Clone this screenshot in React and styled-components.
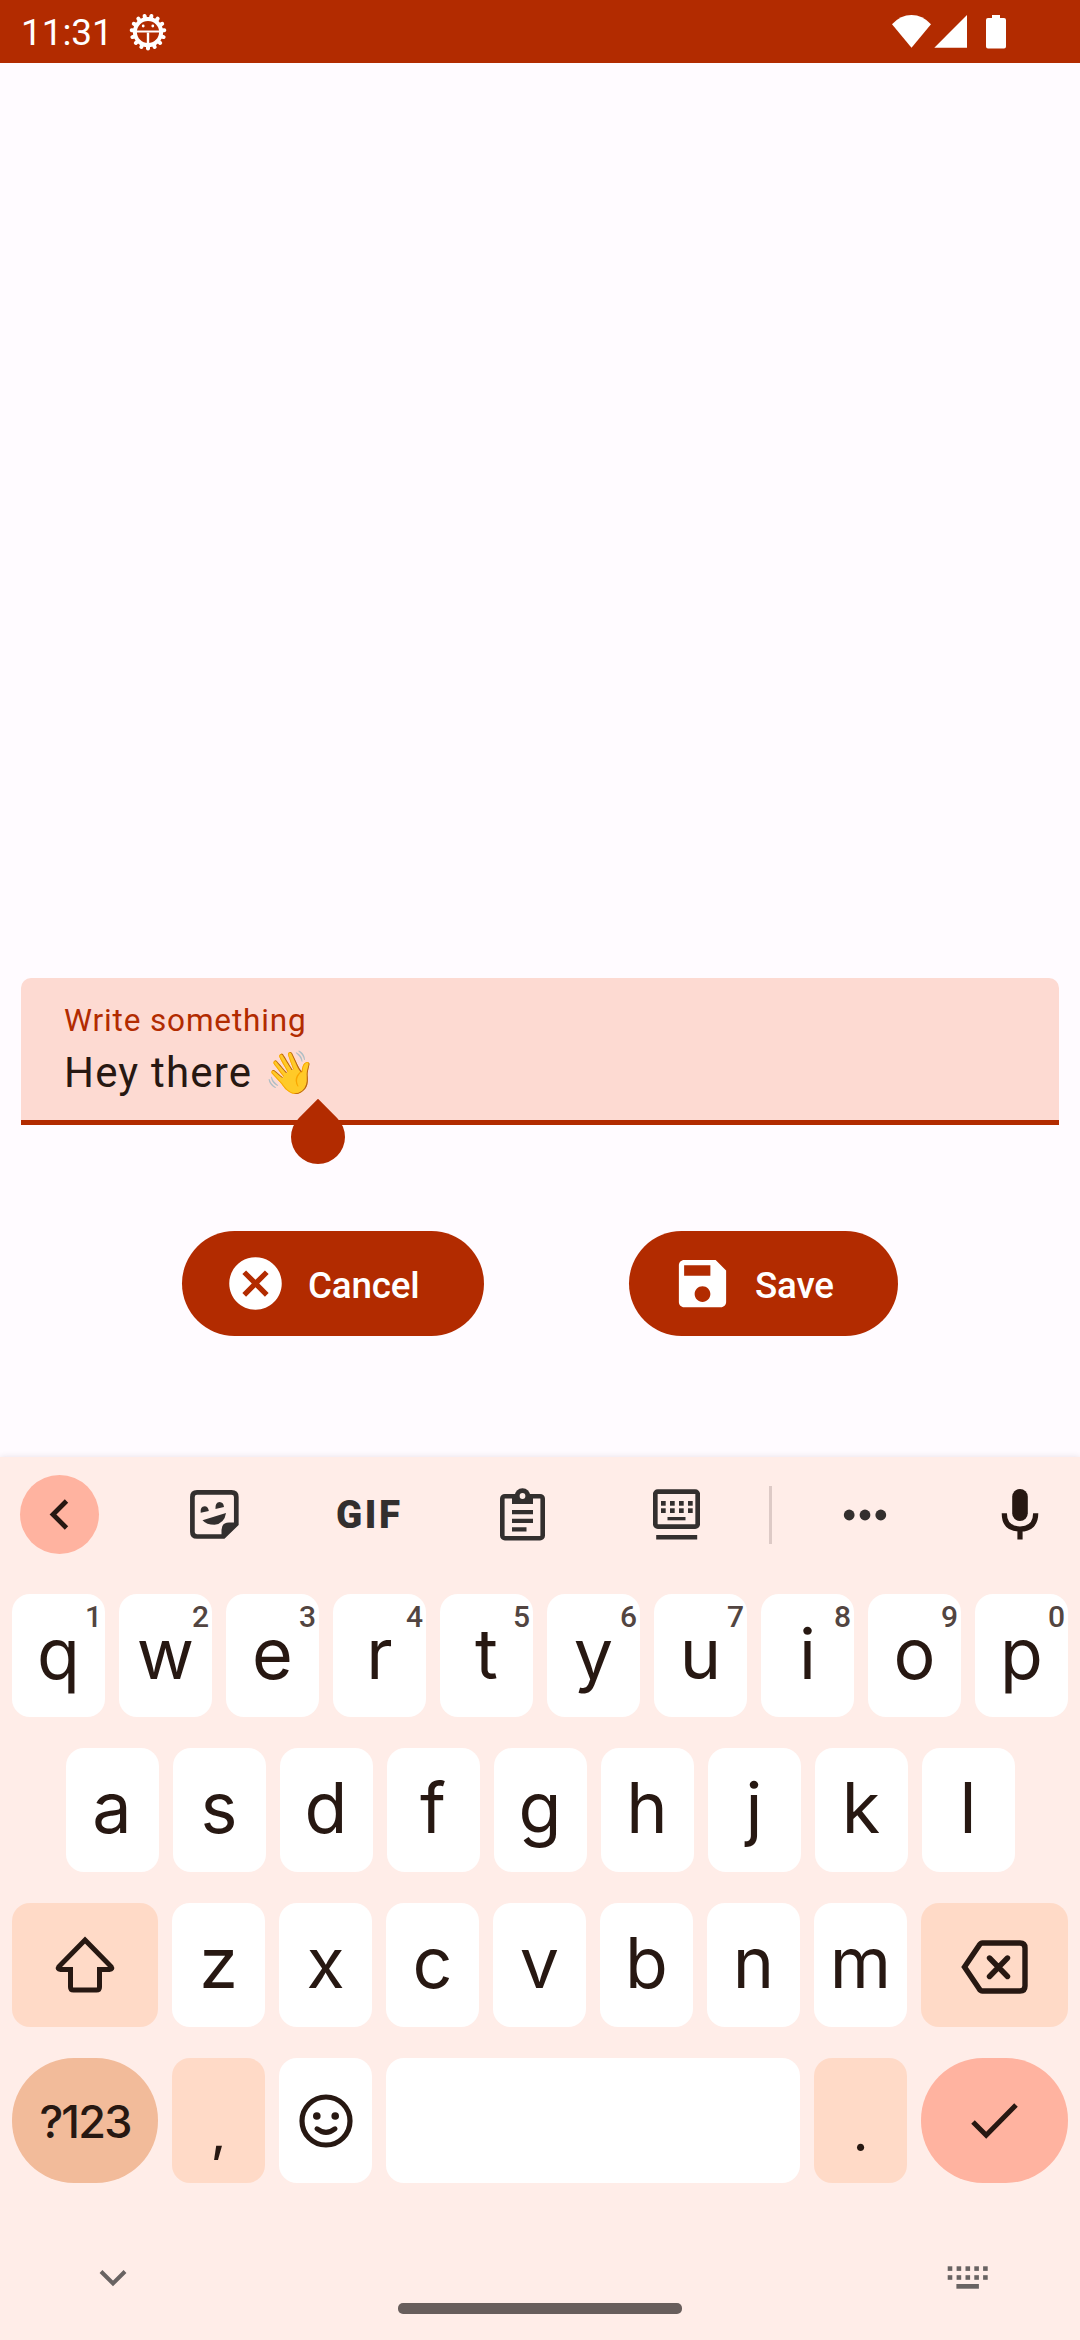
import React from "react";
import styled, { createGlobalStyle } from "styled-components";

const color = {
  primary: "#b22b00",
  surface: "#fffbff",
  field: "#fddad2",
  board: "#ffede8",
  peach: "#ffdac7",
  tan: "#f2bb9a",
  coral: "#ffb3a0",
  ink: "#271812",
  tool: "#332f2e",
  hint: "#524541",
  nav: "#696362",
};

const GlobalStyle = createGlobalStyle`
  * { box-sizing: border-box; }
  body { margin: 0; background: ${color.surface}; font-family: Roboto, "Noto Sans", sans-serif; }
  svg { display: block; flex: none; }
`;

const Screen = styled.div`
  width: 1080px;
  height: 2340px;
  display: flex;
  flex-direction: column;
  background: ${color.surface};
  overflow: hidden;
`;

const StatusBar = styled.header`
  height: 63px;
  flex: none;
  display: flex;
  align-items: center;
  padding: 0 74px 0 21px;
  background: ${color.primary};
  color: #fff;
`;

const Clock = styled.span`
  width: 108px;
  padding-top: 3px;
  font-size: 37px;
  line-height: 44px;
  letter-spacing: -0.1px;
`;

const StatusIcons = styled.div`
  margin-left: auto;
  display: flex;
  align-items: center;
`;

const Content = styled.main`
  flex: 1;
  display: flex;
  flex-direction: column;
  justify-content: flex-end;
  padding: 0 21px 121px;
`;

const Field = styled.div`
  position: relative;
  height: 147px;
  padding: 21px 43px;
  background: ${color.field};
  border-bottom: 5px solid ${color.primary};
  border-radius: 10px 10px 0 0;
`;

const FieldLabel = styled.div`
  font-size: 31.5px;
  line-height: 43px;
  height: 42px;
  letter-spacing: 0.86px;
  color: ${color.primary};
`;

const FieldText = styled.div`
  font-family: Roboto, "Noto Color Emoji", sans-serif;
  font-size: 42px;
  line-height: 63px;
  letter-spacing: 1.2px;
  color: ${color.ink};
  white-space: pre;
`;

const CursorHandle = styled.div`
  position: absolute;
  left: 270px;
  top: 132px;
  width: 54px;
  height: 54px;
  background: ${color.primary};
  border-radius: 0 50% 50% 50%;
  transform: rotate(45deg);
`;

const Actions = styled.div`
  margin-top: 106px;
  display: flex;
  justify-content: center;
  gap: 145px;
`;

const ActionButton = styled.button`
  width: ${(p) => p.$width}px;
  height: 105px;
  display: flex;
  align-items: center;
  gap: 21px;
  padding: 0 0 0 42px;
  border: 0;
  border-radius: 53px;
  background: ${color.primary};
  color: #fff;
  font: 500 36.75px/44px Roboto, sans-serif;
  letter-spacing: -0.2px;
`;

const ActionLabel = styled.span`
  padding-top: 4px;
`;

const Board = styled.section`
  height: 883px;
  flex: none;
  background: ${color.board};
  box-shadow: 0 0 6px rgba(60, 30, 60, 0.12);
  display: flex;
  flex-direction: column;
`;

const Toolbar = styled.div`
  height: 115px;
  display: flex;
  align-items: center;
  padding-left: 20px;
  color: ${color.tool};
`;

const BackButton = styled.div`
  width: 79px;
  height: 79px;
  margin-right: 38px;
  border-radius: 50%;
  background: ${color.coral};
  display: grid;
  place-items: center;
`;

const Tool = styled.div`
  width: ${(p) => p.$width || 154}px;
  padding-right: ${(p) => p.$shift || 0}px;
  display: flex;
  justify-content: center;
`;

const GifLabel = styled.span`
  font: 900 38.5px/46px Roboto, sans-serif;
  letter-spacing: 2.6px;
  margin-right: -2.6px;
`;

const Divider = styled.div`
  width: 3px;
  height: 58px;
  margin-left: 16px;
  background: #ddcac6;
`;

const Keys = styled.div`
  padding: 22px 12px 0;
  display: flex;
  flex-direction: column;
  gap: 31px;
`;

const KeyRow = styled.div`
  display: flex;
  gap: 14px;
  justify-content: center;
  height: ${(p) => p.$height || 124}px;
`;

const Key = styled.div`
  position: relative;
  flex: ${(p) => p.$grow || 0} 0 ${(p) => p.$width || 93}px;
  display: flex;
  align-items: center;
  justify-content: center;
  padding-bottom: ${(p) => p.$lift ?? 4}px;
  border-radius: ${(p) => (p.$round ? 62 : 18)}px;
  background: ${(p) => p.$bg || "#fff"};
  color: ${color.ink};
  font: 400 70px/80px Inter, sans-serif;
`;

const Hint = styled.span`
  position: absolute;
  top: 5px;
  right: 3px;
  font: 500 30px/36px Roboto, sans-serif;
  color: ${color.hint};
`;

const SymbolsLabel = styled.span`
  padding-top: 7px;
  font: 500 45px/54px Inter, sans-serif;
  letter-spacing: -1.8px;
`;

const Punctuation = styled.span`
  font: 500 50px/62px Inter, sans-serif;
  padding-top: 28px;
`;

const NavBar = styled.div`
  flex: 1;
  display: grid;
  grid-template-columns: 398px 284px 1fr;
  align-items: start;
`;

const HideSlot = styled.div`
  padding: 86px 0 0 99px;
`;

const SwitchSlot = styled.div`
  padding: 83px 0 0 265px;
`;

const HomePill = styled.div`
  margin-top: 120px;
  height: 11px;
  border-radius: 5px;
  background: #685e5c;
`;

const teeth = Array.from({ length: 15 }, (_, i) => 90 + i * 24);

const DebugIcon = () => (
  <svg width="38" height="38" viewBox="-19 -19 38 38">
    {teeth.map((deg) => (
      <rect key={deg} x="12" y="-2" width="6.4" height="4" rx="2" fill="#fff" transform={`rotate(${deg})`} />
    ))}
    <circle r="13.1" fill="none" stroke="#fff" strokeWidth="4" />
    <path d="M-12-.5H12" stroke="#fff" strokeWidth="2" />
    <path d="M0 .5V13" stroke="#fff" strokeWidth="2.4" />
    <circle cx="-4.8" cy="-6" r="1.400" fill="#fff" />
    <circle cx="4.8" cy="-6" r="1.400" fill="#fff" />
  </svg>
);

const SignalIcons = () => (
  <svg width="116" height="36" viewBox="890 13 116 36" fill="#fff">
    <path d="M892 23.3Q900.500 14 911.500 14T931 23.300L911.500 46.700Z" />
    <path d="M967 14V46.700H934.300Z" />
    <path d="M992 14H1000V17H1004Q1006 17 1006 19V45.500Q1006 47.500 1004 47.500H988Q986 47.500 986 45.500V19Q986 17 988 17H992Z" />
  </svg>
);

const CancelIcon = () => (
  <svg width="63" height="63" viewBox="0 0 24 24" fill="#fff">
    <path d="M12 2C6.470 2 2 6.470 2 12s4.470 10 10 10 10-4.470 10-10S17.530 2 12 2zm5 13.590L15.590 17 12 13.410 8.410 17 7 15.590 10.590 12 7 8.410 8.410 7 12 10.590 15.590 7 17 8.410 13.410 12 17 15.590z" />
  </svg>
);

const SaveIcon = () => (
  <svg width="63" height="63" viewBox="0 0 24 24" fill="#fff">
    <path d="M17 3H5c-1.110 0-2 .9-2 2v14c0 1.100.89 2 2 2h14c1.100 0 2-.9 2-2V7l-4-4zm-5 16c-1.660 0-3-1.340-3-3s1.340-3 3-3 3 1.340 3 3-1.340 3-3 3zm3-10H5V5h10v4z" />
  </svg>
);

const BackIcon = () => (
  <svg width="79" height="79" viewBox="0 0 79 79" fill="none" stroke={color.ink} strokeWidth="4.800">
    <path d="M46.500 26L33 39.500L46.500 53" />
  </svg>
);

const StickerIcon = () => (
  <svg width="49" height="49" viewBox="0 0 49 49" fill="currentColor">
    <path d="M7 2.400H41.500Q46.300 2.400 46.300 7V34L33.500 46.500H7Q2.400 46.500 2.400 42V7Q2.400 2.400 7 2.400Z" fill="none" stroke="currentColor" strokeWidth="4.700" />
    <path d="M31.500 48V40Q31.500 32.500 39 32.500H48Z" />
    <path d="M10.700 22.800Q10 16.600 14.600 16.200Q18.200 16.400 18.800 20.900Z" />
    <path d="M25.500 19Q25 12.400 29.600 12Q33.400 12.300 34 16.900Z" />
    <path d="M12.500 30.200L36 23Q34.500 33.500 24.500 34.800Q16.500 34.800 12.500 30.200Z" />
  </svg>
);

const ClipboardIcon = () => (
  <svg width="45" height="53" viewBox="0 0 45 53" fill="currentColor">
    <rect x="2.300" y="8.200" width="40.400" height="42" rx="2.600" fill="none" stroke="currentColor" strokeWidth="4.600" />
    <rect x="12" y="6" width="21" height="10" />
    <circle cx="22.500" cy="8" r="7.800" />
    <circle cx="22.500" cy="8" r="2.900" fill={color.board} />
    <path d="M12 22H33V26.300H12ZM12 30.700H33V35H12ZM12 39.300H26.500V43.500H12Z" />
  </svg>
);

const FloatKeyboardIcon = () => (
  <svg width="47" height="51" viewBox="0 0 47 51" fill="currentColor">
    <rect x="2.300" y="2.600" width="42.400" height="35" rx="2.500" fill="none" stroke="currentColor" strokeWidth="4.700" />
    {[8, 17, 26, 35].map((x) => (
      <React.Fragment key={x}>
        <rect x={x} y="12" width="4.700" height="4.700" />
        <rect x={x} y="19.300" width="4.700" height="4.700" />
      </React.Fragment>
    ))}
    <rect x="14.500" y="28" width="18" height="3.300" />
    <rect x="3.200" y="46" width="41" height="4.500" />
  </svg>
);

const MoreIcon = () => (
  <svg width="44" height="12" viewBox="0 0 44 12" fill="currentColor">
    <circle cx="6.200" cy="6" r="5.400" />
    <circle cx="22" cy="6" r="5.400" />
    <circle cx="37.800" cy="6" r="5.400" />
  </svg>
);

const MicIcon = () => (
  <svg width="38" height="51" viewBox="0 0 38 51" fill="none" stroke={color.ink} strokeWidth="5.200">
    <rect x="11.200" y="0" width="15.600" height="32" rx="7.800" fill={color.ink} stroke="none" />
    <path d="M3.300 24.300Q3.300 40 19 40T34.700 24.300M19 40V50.500" />
  </svg>
);

const ShiftIcon = () => (
  <svg width="60" height="58" viewBox="0 0 60 58" fill="none" stroke={color.ink} strokeWidth="5" strokeLinejoin="miter">
    <path d="M30 4L56 30.500Q58 33.500 54.500 33.500H44.500V51Q44.500 54 41.500 54H18.500Q15.500 54 15.500 51V33.500H5.500Q2 33.500 4 30.500Z" />
  </svg>
);

const BackspaceIcon = () => (
  <svg width="68" height="58" viewBox="0 -4 68 58" fill="none" stroke={color.ink} strokeWidth="5.400">
    <path d="M21.500 3H59Q64 3 64 8V46Q64 51 59 51H21.500Q19.500 51 18 48.500L3.500 27L18 5.500Q19.500 3 21.500 3Z" />
    <path d="M28.500 18L46.500 36.500M46.500 18L28.500 36.500" strokeLinecap="round" />
  </svg>
);

const SmileIcon = () => (
  <svg width="54" height="54" viewBox="0 0 54 54" fill="none" stroke={color.ink} strokeWidth="5.200">
    <circle cx="27" cy="27" r="24" />
    <circle cx="17.800" cy="22" r="3.800" fill={color.ink} stroke="none" />
    <circle cx="36.200" cy="22" r="3.800" fill={color.ink} stroke="none" />
    <path d="M18 34.800Q27 42 36 34.800" strokeLinecap="round" strokeWidth="5" />
  </svg>
);

const CheckIcon = () => (
  <svg width="47" height="36" viewBox="0 0 47 36" fill="none" stroke={color.ink} strokeWidth="5">
    <path d="M2 19L15.200 32.300L45 2" />
  </svg>
);

const HideIcon = () => (
  <svg width="28" height="18" viewBox="0 0 28 18" fill="none" stroke={color.nav} strokeWidth="4">
    <path d="M2 2.500L14 14.500L26 2.500" />
  </svg>
);

const SwitchIcon = () => (
  <svg width="42" height="24" viewBox="0 0 42 24" fill={color.nav}>
    {[0.7, 9.6, 18.5, 27.3, 36.1].map((x) => (
      <React.Fragment key={x}>
        <rect x={x} y="0.300" width="4.600" height="4.600" />
        <rect x={x} y="9.200" width="4.600" height="4.600" />
      </React.Fragment>
    ))}
    <rect x="9.400" y="18" width="22.500" height="4.700" />
  </svg>
);

const topRow = [..."qwertyuiop"].map((letter, i) => ({ letter, hint: (i + 1) % 10 }));

export default function App() {
  return (
    <Screen>
      <GlobalStyle />
      <StatusBar>
        <Clock>11:31</Clock>
        <DebugIcon />
        <StatusIcons>
          <SignalIcons />
        </StatusIcons>
      </StatusBar>

      <Content>
        <Field>
          <FieldLabel>Write something</FieldLabel>
          <FieldText>Hey there 👋</FieldText>
          <CursorHandle />
        </Field>
        <Actions>
          <ActionButton $width={302}>
            <CancelIcon />
            <ActionLabel>Cancel</ActionLabel>
          </ActionButton>
          <ActionButton $width={269}>
            <SaveIcon />
            <ActionLabel>Save</ActionLabel>
          </ActionButton>
        </Actions>
      </Content>

      <Board>
        <Toolbar>
          <BackButton>
            <BackIcon />
          </BackButton>
          <Tool><StickerIcon /></Tool>
          <Tool><GifLabel>GIF</GifLabel></Tool>
          <Tool><ClipboardIcon /></Tool>
          <Tool><FloatKeyboardIcon /></Tool>
          <Divider />
          <Tool $width={187} $shift={2}><MoreIcon /></Tool>
          <Tool $width={121}><MicIcon /></Tool>
        </Toolbar>

        <Keys>
          <KeyRow $height={123}>
            {topRow.map(({ letter, hint }) => (
              <Key key={letter}>
                {letter}
                <Hint>{hint}</Hint>
              </Key>
            ))}
          </KeyRow>
          <KeyRow>
            {[..."asdfghjkl"].map((letter) => (
              <Key key={letter}>{letter}</Key>
            ))}
          </KeyRow>
          <KeyRow>
            <Key $width={146} $bg={color.peach} $lift={0}><ShiftIcon /></Key>
            {[..."zxcvbnm"].map((letter) => (
              <Key key={letter}>{letter}</Key>
            ))}
            <Key $width={147} $bg={color.peach} $lift={0}><BackspaceIcon /></Key>
          </KeyRow>
          <KeyRow $height={125}>
            <Key $width={146} $bg={color.tan} $round><SymbolsLabel>?123</SymbolsLabel></Key>
            <Key $bg={color.peach}><Punctuation>,</Punctuation></Key>
            <Key $lift={0}><SmileIcon /></Key>
            <Key $width={100} $grow={1} />
            <Key $bg={color.peach}><Punctuation>.</Punctuation></Key>
            <Key $width={147} $bg={color.coral} $round $lift={0}><CheckIcon /></Key>
          </KeyRow>
        </Keys>

        <NavBar>
          <HideSlot><HideIcon /></HideSlot>
          <HomePill />
          <SwitchSlot><SwitchIcon /></SwitchSlot>
        </NavBar>
      </Board>
    </Screen>
  );
}
